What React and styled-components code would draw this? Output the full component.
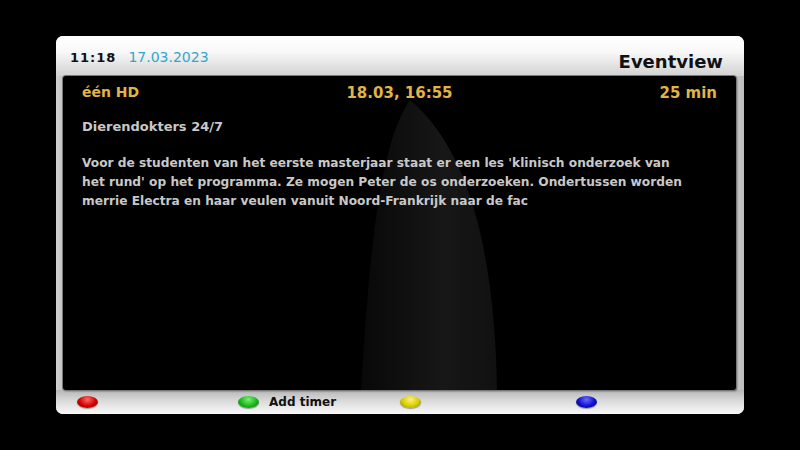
import React from 'react';
import styled, { createGlobalStyle } from 'styled-components';

const GlobalStyle = createGlobalStyle`
  html, body {
    margin: 0;
    padding: 0;
    background: #000;
  }
`;

const Screen = styled.div`
  width: 800px;
  height: 450px;
  box-sizing: border-box;
  padding: 36px 56px;
  background: #000;
  font-family: 'DejaVu Sans', 'Liberation Sans', sans-serif;
`;

const Frame = styled.div`
  width: 688px;
  height: 378px;
  border-radius: 7px;
  display: flex;
  flex-direction: column;
  background: linear-gradient(to bottom, #ffffff 0%, #f2f2f2 6%, #c9c9c9 11%, #b8b8b8 50%, #c4c4c4 90%, #f6f6f6 100%);
  overflow: hidden;
`;

const Header = styled.div`
  height: 40px;
  flex: none;
  display: flex;
  align-items: flex-end;
  padding: 0 21px 4px 14px;
  box-sizing: border-box;
  background: linear-gradient(to bottom, #ffffff 0%, #f8f8f8 40%, #d2d2d2 100%);
`;

const Clock = styled.span`
  font-size: 13px;
  font-weight: bold;
  color: #111;
  letter-spacing: 1px;
  margin-bottom: 7px;
`;

const DateText = styled.span`
  font-size: 14px;
  color: #2ea8cc;
  margin-left: 12px;
  margin-bottom: 7px;
`;

const Title = styled.span`
  margin-left: auto;
  font-size: 18px;
  font-weight: bold;
  color: #111;
`;

const Body = styled.div`
  flex: 1;
  display: flex;
  padding: 0 8px 0 7px;
  background: linear-gradient(to right, #d0d0d0 0%, #c4c4c4 1%, #c4c4c4 99%, #bdbdbd 100%);
`;

const Panel = styled.div`
  position: relative;
  flex: 1;
  background: #000;
  border-radius: 3px;
  box-shadow: 0 0 0 1px #777, 1px 1px 2px rgba(0, 0, 0, 0.6);
  overflow: hidden;
  padding: 8px 19px 0 19px;
  box-sizing: border-box;
`;

const Glow = styled.svg`
  position: absolute;
  left: 0;
  top: 0;
  width: 100%;
  height: 100%;
  z-index: 0;
`;

const Content = styled.div`
  position: relative;
  z-index: 1;
`;

const InfoRow = styled.div`
  display: grid;
  grid-template-columns: 1fr auto 1fr;
  font-weight: bold;
  color: #e0b445;
  height: 18px;
`;

const InfoCell = styled.span`
  text-align: ${(p) => p.$align || 'left'};
  font-size: ${(p) => p.$size || '15px'};
`;

const Event = styled.div`
  margin-top: 17px;
  font-size: 13px;
  font-weight: bold;
  color: #c8c8c8;
`;

const Description = styled.p`
  margin: 20px 0 0 0;
  font-size: 12.2px;
  font-weight: bold;
  line-height: 19px;
  color: #c8c8c8;
  white-space: nowrap;
`;

const Footer = styled.div`
  height: 24px;
  flex: none;
  display: grid;
  grid-template-columns: 161px 162px 176px auto;
  align-items: center;
  padding-left: 21px;
  background: linear-gradient(to bottom, #b6b6b6 0%, #d6d6d6 40%, #eeeeee 80%, #f8f8f8 100%);
`;

const Key = styled.div`
  display: flex;
  align-items: center;
  gap: 10px;
`;

const Oval = styled.span`
  width: 21px;
  height: 12px;
  border-radius: 50%;
  background: radial-gradient(ellipse at 50% 30%, ${(p) => p.$light} 0%, ${(p) => p.$color} 55%, ${(p) => p.$dark} 100%);
  box-shadow: 0 1px 1px rgba(0, 0, 0, 0.35);
`;

const KeyLabel = styled.span`
  font-size: 12px;
  font-weight: bold;
  color: #111;
`;

const keys = [
  { color: '#d10000', light: '#ff6a6a', dark: '#7a0000', label: '' },
  { color: '#18b818', light: '#7cf07c', dark: '#0a6a0a', label: 'Add timer' },
  { color: '#d8cc00', light: '#fff27a', dark: '#807400', label: '' },
  { color: '#1010cc', light: '#6a6aff', dark: '#00006e', label: '' },
];

const descriptionLines = [
  "Voor de studenten van het eerste masterjaar staat er een les 'klinisch onderzoek van",
  "het rund' op het programma. Ze mogen Peter de os onderzoeken. Ondertussen worden",
  'merrie Electra en haar veulen vanuit Noord-Frankrijk naar de fac',
];

const App = () => {
  return (
    <>
      <GlobalStyle />
      <Screen>
        <Frame>
          <Header>
            <Clock>11:18</Clock>
            <DateText>17.03.2023</DateText>
            <Title>Eventview</Title>
          </Header>
          <Body>
            <Panel>
              <Glow viewBox="0 0 673 314" preserveAspectRatio="none">
                <defs>
                  <linearGradient id="glow" x1="0" y1="0" x2="1" y2="0">
                    <stop offset="0" stopColor="#080808" />
                    <stop offset="0.6" stopColor="#171717" />
                    <stop offset="1" stopColor="#111111" />
                  </linearGradient>
                </defs>
                <path
                  d="M347 24 C 322 60, 308 140, 298 314 L 434 314 C 432 200, 414 80, 347 24 Z"
                  fill="url(#glow)"
                />
              </Glow>
              <Content>
                <InfoRow>
                  <InfoCell $size="14px">één HD</InfoCell>
                  <InfoCell $align="center">18.03, 16:55</InfoCell>
                  <InfoCell $align="right">25 min</InfoCell>
                </InfoRow>
                <Event>Dierendokters 24/7</Event>
                <Description>
                  {descriptionLines.map((line, i) => (
                    <React.Fragment key={i}>
                      {line}
                      {i < descriptionLines.length - 1 && <br />}
                    </React.Fragment>
                  ))}
                </Description>
              </Content>
            </Panel>
          </Body>
          <Footer>
            {keys.map((k, i) => (
              <Key key={i}>
                <Oval $color={k.color} $light={k.light} $dark={k.dark} />
                {k.label && <KeyLabel>{k.label}</KeyLabel>}
              </Key>
            ))}
          </Footer>
        </Frame>
      </Screen>
    </>
  );
};

export default App;
